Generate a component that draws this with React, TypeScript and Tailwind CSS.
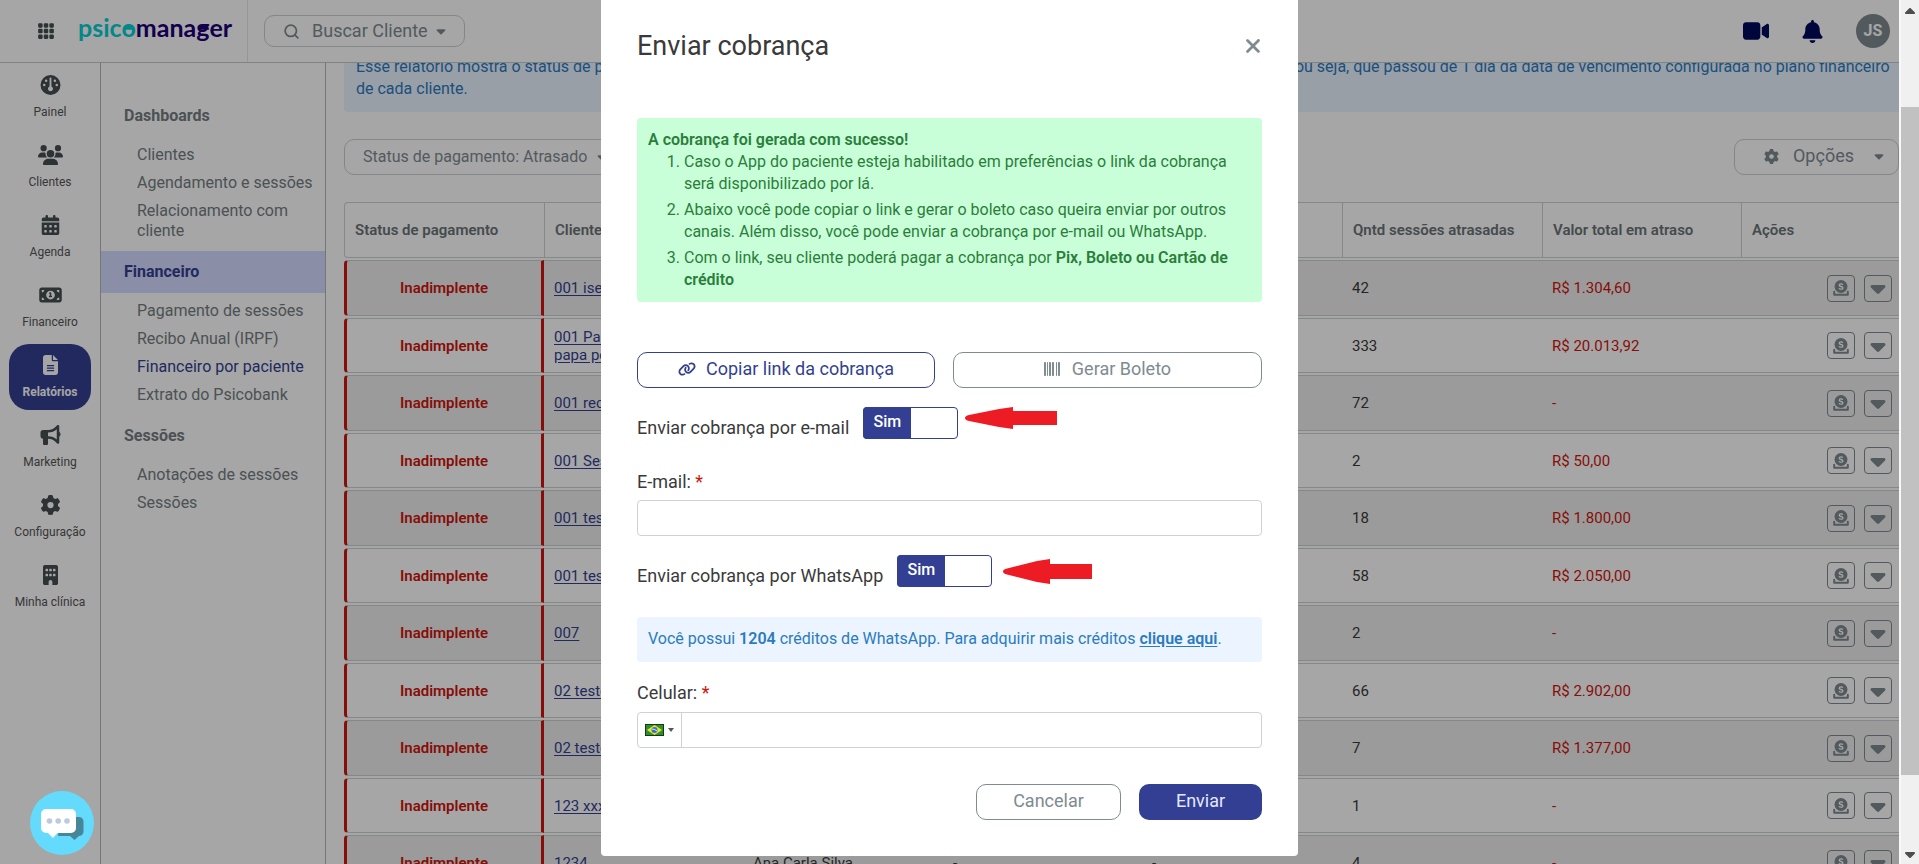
import type { ReactNode } from "react";
import { Search } from "lucide-react";
import { BsGrid3X3GapFill } from "react-icons/bs";
import {
  FaBarcode,
  FaBell,
  FaBuilding,
  FaBullhorn,
  FaCalendarDays,
  FaCaretDown,
  FaCaretUp,
  FaFileLines,
  FaGauge,
  FaGear,
  FaLink,
  FaMoneyBill1,
  FaUsers,
  FaVideo,
  FaXmark,
} from "react-icons/fa6";

const navItems = [
  { label: "Painel", icon: FaGauge },
  { label: "Clientes", icon: FaUsers },
  { label: "Agenda", icon: FaCalendarDays },
  { label: "Financeiro", icon: FaMoneyBill1 },
  { label: "Relatórios", icon: FaFileLines, active: true },
  { label: "Marketing", icon: FaBullhorn },
  { label: "Configuração", icon: FaGear },
  { label: "Minha clínica", icon: FaBuilding },
];

const menuGroups = [
  {
    title: "Dashboards",
    links: ["Clientes", "Agendamento e sessões", "Relacionamento com cliente"],
  },
  {
    title: "Financeiro",
    active: true,
    links: [
      "Pagamento de sessões",
      "Recibo Anual (IRPF)",
      "Financeiro por paciente",
      "Extrato do Psicobank",
    ],
  },
  { title: "Sessões", links: ["Anotações de sessões", "Sessões"] },
];

const columns = [
  { label: "Status de pagamento", width: "w-[200px]" },
  { label: "Cliente", width: "w-[199px]" },
  { label: "Responsável", width: "w-[200px]" },
  { label: "E-mail", width: "w-[199px]" },
  { label: "Telefone", width: "w-[200px]" },
  { label: "Qntd sessões atrasadas", width: "w-[200px]" },
  { label: "Valor total em atraso", width: "w-[199px]" },
  { label: "Ações", width: "" },
];

const rows = [
  { client: "001 isento", owner: "-", count: 42, total: "R$ 1.304,60" },
  { client: "001 Pamela papa pedro", owner: "-", count: 333, total: "R$ 20.013,92" },
  { client: "001 recibo", owner: "-", count: 72, total: "-" },
  { client: "001 Sessão", owner: "-", count: 2, total: "R$ 50,00" },
  { client: "001 teste", owner: "-", count: 18, total: "R$ 1.800,00" },
  { client: "001 teste 2", owner: "-", count: 58, total: "R$ 2.050,00" },
  { client: "007", owner: "-", count: 2, total: "-" },
  { client: "02 teste", owner: "-", count: 66, total: "R$ 2.902,00" },
  { client: "02 teste 2", owner: "-", count: 7, total: "R$ 1.377,00" },
  { client: "123 xxx", owner: "-", count: 1, total: "-" },
  { client: "1234", owner: "Ana Carla Silva", count: 4, total: "-" },
];

// Fills the upper half of a round letter so its counter reads as a smile
function SmileFill() {
  return (
    <svg viewBox="0 0 12 6" className="absolute bottom-3 left-0.5 h-1.5 w-[11px]">
      <path d="M0 6a6 6 0 0 1 12 0z" fill="currentColor" />
    </svg>
  );
}

function Logo() {
  return (
    <a href="#" className="ml-[23px] pb-2 font-['Lato',sans-serif] text-[25px] leading-8 font-bold whitespace-nowrap">
      <span className="text-[#06d0d4]">psic</span>
      <span className="relative text-[#06d0d4]">
        o
        <SmileFill />
      </span>
      <span className="text-[#1c007a]">mana</span>
      <span className="relative text-[#1c007a]">
        g
        <SmileFill />
      </span>
      <span className="text-[#1c007a]">er</span>
    </a>
  );
}

function Header() {
  return (
    <header className="flex h-[63px] shrink-0 items-center border-b border-[#c3caca]">
      <div className="flex h-full w-[248px] shrink-0 items-center border-r border-[#e6e6e6] pl-[37px]">
        <button type="button" aria-label="Aplicativos">
          <BsGrid3X3GapFill className="size-[18px] text-[#454e52]" />
        </button>
        <Logo />
      </div>
      <button
        type="button"
        className="ml-4 flex h-8 items-center rounded-[10px] border border-[#c9cfd2] pr-4 pl-[18px] text-lg text-[#7e8b91]"
      >
        <Search className="mr-3 size-[17px]" strokeWidth={2.5} />
        Buscar Cliente
        <FaCaretDown className="ml-1.5 size-3.5" />
      </button>
      <div className="ml-auto flex items-center pr-[9px] text-[#00085c]">
        <button type="button" aria-label="Vídeo chamada">
          <FaVideo className="size-[26px]" />
        </button>
        <button type="button" aria-label="Notificações" className="ml-8">
          <FaBell className="size-[23px]" />
        </button>
        <button
          type="button"
          className="ml-8 size-[34px] rounded-full bg-[#7e8b91] text-base font-bold text-white"
        >
          JS
        </button>
      </div>
    </header>
  );
}

function Sidebar() {
  return (
    <nav className="flex w-[101px] shrink-0 flex-col items-center gap-1 border-r border-[#b0b8bb] pt-px">
      {navItems.map(({ label, icon: Icon, active }) => (
        <a
          key={label}
          href="#"
          className={
            active
              ? "flex h-[66px] w-[82px] flex-col items-center rounded-[20px] bg-[#333f92] pt-[11px] text-xs font-bold text-white"
              : "flex h-[66px] w-[82px] flex-col items-center pt-[11px] text-xs text-[#555]"
          }
        >
          <Icon className={active ? "h-5 w-[25px]" : "h-5 w-[25px] text-[#454e52]"} />
          <span className="mt-2 leading-[18px] whitespace-nowrap">{label}</span>
        </a>
      ))}
    </nav>
  );
}

function Submenu() {
  return (
    <aside className="w-[225px] shrink-0 border-r border-[#b0b8bb] pt-8 text-base text-[#747d81]">
      {menuGroups.map((group) => (
        <div key={group.title} className="mb-1.5">
          <h2
            className={
              group.active
                ? "mb-1 bg-[#d5dbff] pl-[23px] leading-[42px] font-bold text-[#333f92]"
                : "mb-1 pl-[23px] leading-[42px] font-bold"
            }
          >
            {group.title}
          </h2>
          <ul className="pr-3 pl-9">
            {group.links.map((link) => (
              <li key={link} className="py-1 leading-5">
                <a href="#" className={link === "Financeiro por paciente" ? "text-[#333f92]" : ""}>
                  {link}
                </a>
              </li>
            ))}
          </ul>
        </div>
      ))}
    </aside>
  );
}

function CoinIcon() {
  return (
    <svg viewBox="0 0 16 16" className="size-4" fill="none">
      <circle cx="8" cy="6.500" r="6.500" fill="currentColor" />
      <path
        d="M1.200 11.800v3h13.600v-3"
        stroke="currentColor"
        strokeWidth="2"
        strokeLinejoin="round"
        strokeLinecap="round"
      />
      <path
        d="M9.800 4.800C9.400 4.100 8.800 3.900 8 3.900c-1 0-1.800.5-1.800 1.300C6.200 7 9.900 6 9.900 7.900c0 .8-.8 1.300-1.900 1.300-.9 0-1.600-.3-2-1"
        stroke="#fff"
        strokeWidth="1.300"
      />
    </svg>
  );
}

function RowActions() {
  const button =
    "flex h-[27px] w-7 items-center justify-center rounded-sm border border-[#7e8b91] text-[#7e8b91]";
  return (
    <div className="flex justify-end gap-[9px]">
      <button type="button" aria-label="Gerar cobrança" className={button}>
        <CoinIcon />
      </button>
      <button type="button" aria-label="Mais ações" className={button}>
        <FaCaretDown className="size-6" />
      </button>
    </div>
  );
}

function ReportTable() {
  return (
    <table className="-mt-0.5 w-full table-fixed border-separate border-spacing-x-0 border-spacing-y-[2px] text-[15px] leading-[18px]">
      <thead>
        <tr className="h-14 text-left text-[#6b7377]">
          {columns.map((column) => (
            <th
              key={column.label}
              className={`${column.width} border-y border-l border-[#cdd2d2] px-2.5 font-semibold first:rounded-l-sm`}
            >
              {column.label}
            </th>
          ))}
        </tr>
      </thead>
      <tbody>
        {rows.map((row) => (
          <tr
            key={row.client}
            className="text-[#3a3a3a] odd:h-14 odd:bg-[#efefef] even:h-[55px] [&>td]:border-y [&>td]:border-[#cdd2d2] [&>td]:px-2.5"
          >
            <td className="rounded-l-sm border-x-[3px] border-x-[#d0150d]! text-center font-semibold text-[#d0150d]">
              Inadimplente
            </td>
            <td>
              <a href="#" className="block w-28 text-[#333f92] underline underline-offset-2">
                {row.client}
              </a>
            </td>
            <td>{row.owner}</td>
            <td>-</td>
            <td>-</td>
            <td>{row.count}</td>
            <td className="text-[#d0150d]">{row.total}</td>
            <td className="pr-[7px]!">
              <RowActions />
            </td>
          </tr>
        ))}
      </tbody>
    </table>
  );
}

function Report() {
  return (
    <main className="min-w-0 flex-1 overflow-hidden pl-[18px]">
      <p className="-mt-[19px] rounded-l-sm bg-[#ebf4ff] px-3 py-3 pr-1 text-base leading-[22px] text-[#2b7bbf]">
        Esse relatório mostra o status de pagamento de cada cliente. O status atrasado indica os clientes que possuem
        sessões em atraso, ou seja, que passou de 1 dia da data de vencimento configurada no plano financeiro de cada
        cliente.
      </p>
      <div className="mt-[27px] flex justify-between text-[#7e8b91]">
        <button
          type="button"
          className="flex h-9 items-center rounded-[10px] border border-[#c9cfd2] px-[18px] text-base"
        >
          Status de pagamento: Atrasado
          <FaCaretDown className="ml-2 size-3.5" />
        </button>
        <button
          type="button"
          className="flex h-9 items-center rounded-[10px] border border-[#c9cfd2] pr-3 pb-0.5 pl-[29px] text-lg"
        >
          <FaGear className="mr-3.5 size-[15px]" />
          Opções
          <FaCaretDown className="ml-[18px] size-3.5" />
        </button>
      </div>
      <div className="mt-[27px]">
        <ReportTable />
      </div>
    </main>
  );
}

function Toggle({ id, label, children }: { id: string; label: string; children: ReactNode }) {
  return (
    <div className="flex items-start">
      <label htmlFor={id} className="mt-[9px] leading-6">
        {label}
      </label>
      <span className="relative ml-3.5 h-8 w-[95px]">
        <input
          id={id}
          type="checkbox"
          defaultChecked
          className="block h-8 w-full appearance-none rounded-sm border border-[#333f92] bg-white"
        />
        <span className="pointer-events-none absolute inset-y-0 left-0 w-12 rounded-l-sm bg-[#333f92] text-center text-base leading-[30px] font-medium text-white">
          Sim
        </span>
      </span>
      {children}
    </div>
  );
}

function BrazilFlag() {
  return (
    <svg viewBox="0 0 19 12" className="h-3 w-[19px]">
      <rect width="19" height="12" fill="#123b12" />
      <rect x="1" y="1" width="17" height="10" fill="#2f8f2f" />
      <path d="M9.500 1 17 6 9.500 11 2 6z" fill="#e8e337" />
      <circle cx="9.500" cy="6" r="3" fill="#3f6fc4" />
      <path d="M7 5q3 0 5 2" stroke="#dbe8fa" strokeWidth="1" fill="none" />
    </svg>
  );
}

function ChargeModal() {
  return (
    <div className="absolute inset-y-0 right-5 left-0 flex items-start justify-center bg-black/35">
      <section
        role="dialog"
        aria-label="Enviar cobrança"
        className="w-[697px] rounded-b-sm bg-white px-9 pb-9 text-lg text-[#3a3a3a]"
      >
        <div className="flex items-center justify-between pt-7">
          <h1 className="text-[27px] leading-9">Enviar cobrança</h1>
          <button type="button" aria-label="Fechar" className="-mr-0.5 text-[#7e8b91]">
            <FaXmark className="size-[22px]" />
          </button>
        </div>

        <div className="mt-[54px] rounded-sm bg-[#c8ffd8] px-[11px] pt-2.5 pb-[7px] text-base text-[#2b7d3b]">
          <p className="leading-[23px] font-semibold">A cobrança foi gerada com sucesso!</p>
          <ol className="list-decimal pr-4 pl-9 leading-[22px]">
            <li className="mb-1">
              Caso o App do paciente esteja habilitado em preferências o link da cobrança será disponibilizado por lá.
            </li>
            <li className="mb-1">
              Abaixo você pode copiar o link e gerar o boleto caso queira enviar por outros canais. Além disso, você
              pode enviar a cobrança por e-mail ou WhatsApp.
            </li>
            <li className="mb-1">
              Com o link, seu cliente poderá pagar a cobrança por{" "}
              <b className="font-semibold">Pix, Boleto ou Cartão de crédito</b>
            </li>
          </ol>
        </div>

        <div className="mt-[50px] flex gap-[18px]">
          <button
            type="button"
            className="flex h-9 w-[298px] items-center justify-center rounded-[10px] border border-[#333f92] pb-0.5 text-[#333f92]"
          >
            <FaLink className="mr-2.5 size-[18px]" />
            Copiar link da cobrança
          </button>
          <button
            type="button"
            className="flex h-9 flex-1 items-center justify-center rounded-[10px] border border-[#7e8b91] pb-0.5 text-[#7e8b91]"
          >
            <FaBarcode className="mr-3 size-4" />
            Gerar Boleto
          </button>
        </div>

        <div className="mt-[19px]">
          <Toggle id="send-email" label="Enviar cobrança por e-mail">
            <svg viewBox="0 0 92 22" className="ml-[7px] h-[22px] w-[92px]">
              <path d="M0 11q0-2 4-3L34 2 48 0v4h44v14H48v4L34 20 4 14q-4-1-4-3z" fill="#ed1c24" />
            </svg>
          </Toggle>
        </div>

        <div className="mt-[30px]">
          <label htmlFor="email" className="block leading-6">
            E-mail: <span className="text-[#d0150d]">*</span>
          </label>
          <input id="email" type="email" className="mt-1.5 block h-9 w-full rounded-sm border border-[#cfd2d3] px-3" />
        </div>

        <div className="mt-[19px]">
          <Toggle id="send-whatsapp" label="Enviar cobrança por WhatsApp">
            <svg viewBox="0 0 89 25" className="mt-1 ml-[11px] h-[25px] w-[89px]">
              <path d="M0 12.500q0-2 4-3L34 2 47 0v5h42v15H47v5L34 23 4 15.500q-4-1-4-3z" fill="#ed1c24" />
            </svg>
          </Toggle>
        </div>

        <p className="mt-[29px] rounded-sm bg-[#ebf4ff] px-[11px] pt-[11px] pb-3 text-base leading-[22px] text-[#2b7bbf]">
          Você possui <b className="font-semibold">1204</b> créditos de WhatsApp. Para adquirir mais créditos{" "}
          <a href="#" className="font-semibold underline underline-offset-2">
            clique aqui
          </a>
          .
        </p>

        <div className="mt-[19px]">
          <label htmlFor="phone" className="block leading-6">
            Celular: <span className="text-[#d0150d]">*</span>
          </label>
          <div className="mt-[7px] flex h-9 rounded-sm border border-[#cfd2d3]">
            <button
              type="button"
              aria-label="País"
              className="flex w-11 items-center justify-center gap-1 border-r border-[#cfd2d3]"
            >
              <BrazilFlag />
              <svg viewBox="0 0 6 4" className="h-1 w-1.5">
                <path d="M0 0h6L3 4z" fill="#555" />
              </svg>
            </button>
            <input id="phone" type="tel" className="min-w-0 flex-1 px-3" />
          </div>
        </div>

        <div className="mt-9 flex justify-end gap-[18px]">
          <button
            type="button"
            className="h-9 w-[145px] rounded-[10px] border border-[#7e8b91] pb-0.5 text-[#7e8b91]"
          >
            Cancelar
          </button>
          <button type="button" className="h-9 w-[123px] rounded-[10px] bg-[#333f92] pb-0.5 text-[#e4e8ff]">
            Enviar
          </button>
        </div>
      </section>
    </div>
  );
}

function ChatButton() {
  return (
    <button
      type="button"
      aria-label="Abrir chat"
      className="absolute bottom-[9px] left-[30px] size-16 rounded-full bg-[#64dafc]"
    >
      <svg viewBox="0 0 64 64" className="size-16">
        <path
          d="M30 26h19a4.500 4.500 0 0 1 4.500 4.500v10a4.500 4.500 0 0 1-4.500 4.500l-4.500 4-4.500-4H28z"
          fill="#478699"
        />
        <path
          d="M16 18h25a5 5 0 0 1 5 5v14a5 5 0 0 1-5 5H27.500L23 47l-5-5h-2a5 5 0 0 1-5-5V23a5 5 0 0 1 5-5z"
          fill="#fff"
        />
        <circle cx="19.500" cy="30" r="2.800" fill="#bccadd" />
        <circle cx="28.200" cy="30" r="2.800" fill="#bccadd" />
        <circle cx="37" cy="30" r="2.800" fill="#bccadd" />
      </svg>
    </button>
  );
}

function ScrollTrack() {
  return (
    <div className="flex w-5 shrink-0 flex-col items-center border-l-2 border-[#f8f8f8] bg-[#f0f0f0] text-[#4d4d4d]">
      <FaCaretUp className="mt-1 size-4" />
      <div className="mt-[87px] w-full flex-1 bg-[#c1c1c1]" />
      <FaCaretDown className="mt-[71px] mb-0.5 size-4" />
    </div>
  );
}

export default function App() {
  return (
    <div className="relative flex h-screen overflow-hidden bg-white font-['Roboto',sans-serif]">
      <div className="flex min-w-0 flex-1 flex-col">
        <Header />
        <div className="flex min-h-0 flex-1">
          <Sidebar />
          <Submenu />
          <Report />
        </div>
      </div>
      <ScrollTrack />
      <ChargeModal />
      <ChatButton />
    </div>
  );
}
